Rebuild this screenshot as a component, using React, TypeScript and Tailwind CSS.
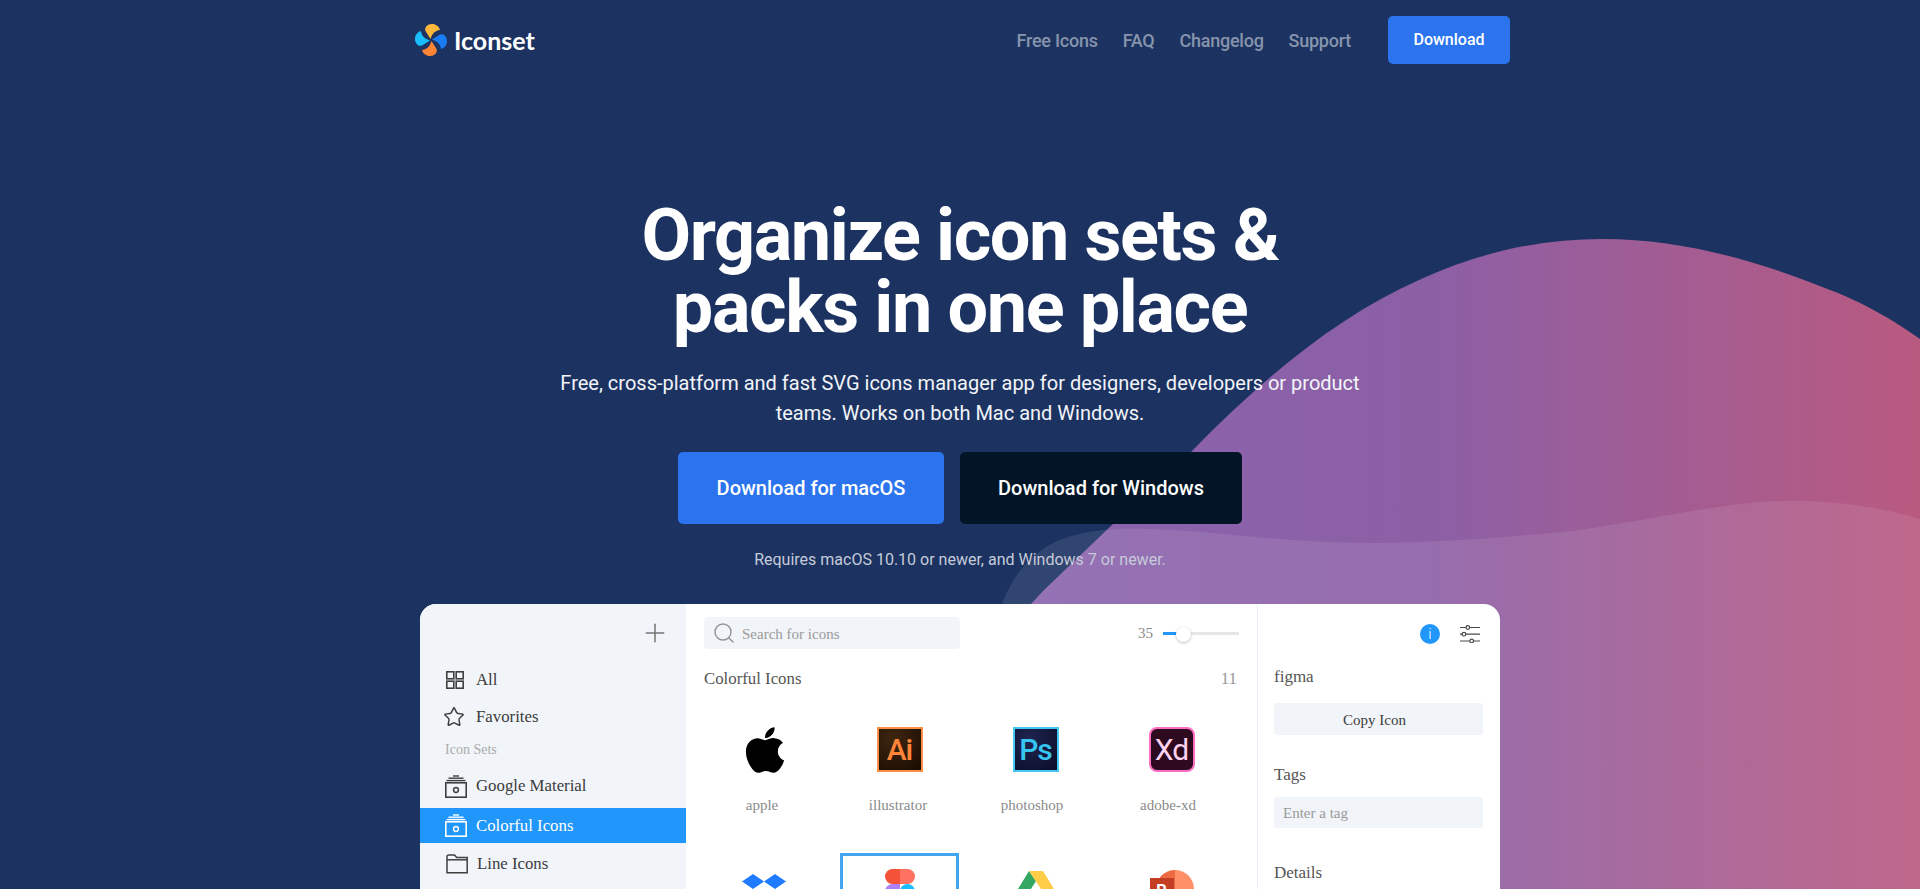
import { Search, Star, Plus } from 'lucide-react';
import { FaApple } from 'react-icons/fa';

function Logo() {
  const petal = 'M15.5 15 L10.5 7 C9 3.5 12.5 0 17 0 C21 0 24 2.5 25 6 C20 6.5 17 10 15.5 15Z';
  return (
    <svg width="32" height="32" viewBox="0 0 32 32">
      <path d={petal} fill="#fdb73d" />
      <path d={petal} fill="#1a7cf5" transform="rotate(90 16 16)" />
      <path d={petal} fill="#fb8535" transform="rotate(180 16 16)" />
      <path d={petal} fill="#19bdfb" transform="rotate(270 16 16)" />
    </svg>
  );
}

function Waves() {
  return (
    <svg className="absolute inset-0 pointer-events-none" width="1920" height="889" viewBox="0 0 1920 889">
      <defs>
        <linearGradient id="blob" x1="1030" y1="0" x2="1920" y2="0" gradientUnits="userSpaceOnUse">
          <stop offset="0" stopColor="#8a64ae" />
          <stop offset="0.45" stopColor="#8c5fa5" />
          <stop offset="1" stopColor="#b95a80" />
        </linearGradient>
      </defs>
      <path
        d="M960 680 L1044 590 L1113 524 L1191 452 C1266 375 1340 315 1419 280 C1480 252 1540 239 1603 239 C1680 239 1756 260 1830 290 C1870 305 1900 325 1920 339 L1920 889 L960 889Z"
        fill="url(#blob)"
      />
      <path
        d="M996 889 L996 625 C1006 580 1030 552 1060 540 C1085 530 1120 527 1150 529 C1190 530 1230 535 1266 538 C1320 543 1370 544 1419 542 C1470 540 1520 536 1572 531 C1630 523 1680 512 1725 506 C1760 501 1790 500 1817 501.5 C1860 504 1890 510 1920 519 L1920 889Z"
        fill="#ffffff"
        fillOpacity="0.09"
      />
    </svg>
  );
}

function GridIcon() {
  return (
    <svg width="20" height="20" viewBox="0 0 20 20" fill="none" stroke="#3f3f3f" strokeWidth="1.6">
      <rect x="1.8" y="1.8" width="7" height="7" />
      <rect x="11.2" y="1.8" width="7" height="7" />
      <rect x="1.8" y="11.2" width="7" height="7" />
      <rect x="11.2" y="11.2" width="7" height="7" />
    </svg>
  );
}

function SetIcon({ color }: { color: string }) {
  return (
    <svg width="22" height="23" viewBox="0 0 22 23" fill="none" stroke={color} strokeWidth="1.4">
      <path d="M8 1h6" />
      <path d="M3.5 3.2h15" />
      <path d="M1.5 5.6h19" />
      <rect x="0.8" y="7.8" width="20.4" height="14.4" strokeWidth="1.6" />
      <circle cx="11" cy="15" r="2.4" strokeWidth="1.5" />
    </svg>
  );
}

function FolderIcon() {
  return (
    <svg width="22" height="20" viewBox="0 0 22 20" fill="none" stroke="#3f3f3f" strokeWidth="1.5">
      <path d="M1 18.8V2.5C1 1.6 1.6 1 2.5 1h6l2.2 2.6h10.5v15.2z" />
      <path d="M1 5.8h20.2" />
    </svg>
  );
}

function SlidersIcon() {
  return (
    <svg width="20" height="18" viewBox="0 0 20 18" fill="none" stroke="#4a4a4a" strokeWidth="1.2">
      <path d="M0 2.5h6M9.6 2.5h10.4M0 9.2h2.2M5.8 9.2h14.2M0 16h9.9M13.5 16h6.5" />
      <circle cx="7.8" cy="2.5" r="1.8" />
      <circle cx="4" cy="9.2" r="1.8" />
      <circle cx="11.7" cy="16" r="1.8" />
    </svg>
  );
}

function AdobeIcon({ label, className }: { label: string; className: string }) {
  return (
    <div
      className={`w-[46px] h-[45px] border-[2px] flex items-center justify-center font-['Roboto',sans-serif] text-[30px] tracking-[-1px] ${className}`}
    >
      {label}
    </div>
  );
}

function DropboxIcon() {
  return (
    <svg width="44" height="36" viewBox="0 0 44 36" fill="#1f7bff">
      <path d="M11 0l11 7.5L11 15 0 7.5z" />
      <path d="M33 0l11 7.5L33 15 22 7.5z" />
      <path d="M11 15l11 7.5L11 30 0 22.5z" />
      <path d="M33 15l11 7.5L33 30 22 22.5z" />
    </svg>
  );
}

function FigmaIcon() {
  return (
    <svg width="30" height="45" viewBox="0 0 30 45">
      <path d="M15 0H7.5a7.5 7.5 0 0 0 0 15H15z" fill="#f4533a" />
      <path d="M15 0h7.5a7.5 7.5 0 0 1 0 15H15z" fill="#ff7262" />
      <path d="M15 15H7.5a7.5 7.5 0 0 0 0 15H15z" fill="#ae80f5" />
      <circle cx="22.5" cy="22.5" r="7.5" fill="#1abcfe" />
      <path d="M7.5 30H15v7.5a7.5 7.5 0 1 1-7.5-7.5z" fill="#0acf83" />
    </svg>
  );
}

function DriveIcon() {
  return (
    <svg width="36" height="32" viewBox="0 0 36 32" className="-mt-[10px]">
      <path d="M11 0L0 18l6 11L18 10z" fill="#34a863" />
      <path d="M11 0h14l11 18H23z" fill="#ffcd48" />
      <path d="M6 29h24l6-11H13z" fill="#4285f4" />
    </svg>
  );
}

function PowerPointIcon() {
  return (
    <div className="relative w-[44px] h-[46px] mt-[3px]">
      <svg width="44" height="46" viewBox="0 0 44 46" className="absolute inset-0">
        <path d="M25 0a19 19 0 0 0 0 38z" fill="#ee6a42" />
        <path d="M25 0a19 19 0 0 1 0 38z" fill="#ff9169" />
      </svg>
      <div className="absolute left-0 top-[8px] w-[24px] h-[26px] bg-[#c43e25] text-white font-['Roboto',sans-serif] font-bold text-[16px] flex items-center justify-center">
        P
      </div>
    </div>
  );
}

// the second row's names fall below the fold, so only the first row has labels
const icons = [
  { id: 'apple', label: 'apple', nudge: 'pr-[3px]', icon: <FaApple size={52} color="#000" className="ml-[3px]" /> },
  {
    id: 'illustrator',
    label: 'illustrator',
    nudge: 'pr-[3px]',
    icon: <AdobeIcon label="Ai" className="font-medium border-[#ff8f45] text-[#ff8438] bg-[radial-gradient(circle_at_35%_25%,#3f2610,#180a01)]" />,
  },
  {
    id: 'photoshop',
    label: 'photoshop',
    nudge: 'pr-[7px]',
    icon: <AdobeIcon label="Ps" className="font-medium border-[#42c8f5] text-[#36c5f0] bg-[radial-gradient(circle_at_35%_25%,#1e2450,#0b0c28)]" />,
  },
  {
    id: 'adobe-xd',
    label: 'adobe-xd',
    nudge: 'pr-[7px]',
    icon: <AdobeIcon label="Xd" className="rounded-[8px] border-[#ff6ec0] text-[#ffd3f0] bg-[#2e0a1f]" />,
  },
  { id: 'dropbox', icon: <DropboxIcon /> },
  { id: 'figma', icon: <FigmaIcon />, selected: true },
  { id: 'google-drive', icon: <DriveIcon /> },
  { id: 'powerpoint', icon: <PowerPointIcon /> },
];

const navLinks = [
  { label: 'Free Icons' },
  { label: 'FAQ' },
  { label: 'Changelog' },
  { label: 'Support' },
];

function Sidebar() {
  return (
    <aside className="w-[266px] shrink-0 bg-[#f1f4f8] text-[16.8px] leading-6 text-[#3c3c3c]">
      <div className="h-[58px] flex justify-end items-start pt-[14px] pr-[16px]">
        <Plus size={30} strokeWidth={1.2} color="#757575" />
      </div>
      <div className="flex items-center h-9 pl-[25px] gap-[11px]">
        <GridIcon />
        <span>All</span>
      </div>
      <div className="flex items-center h-9 pl-[23px] gap-[11px] mt-px">
        <Star size={22} strokeWidth={1.6} color="#3f3f3f" />
        <span>Favorites</span>
      </div>
      <div className="flex items-center h-[30px] pl-[25px] text-[14px] text-[#acacac]">Icon Sets</div>
      <div className="flex items-center h-9 pl-[25px] gap-[9px] mt-[3px]">
        <SetIcon color="#3f3f3f" />
        <span>Google Material</span>
      </div>
      <div className="flex items-center h-[35px] pl-[25px] gap-[9px] mt-[4px] bg-[#2196fb] text-white">
        <SetIcon color="#ffffff" />
        <span>Colorful Icons</span>
      </div>
      <div className="flex items-center h-9 pl-[26px] gap-[9px] mt-[3px]">
        <FolderIcon />
        <span>Line Icons</span>
      </div>
    </aside>
  );
}

function IconGrid() {
  return (
    <div className="grid grid-cols-[repeat(4,119px)] gap-x-[17px] gap-y-[16px] mt-[20px]">
      {icons.map(item => (
        <div
          key={item.id}
          className={`relative h-[126px] flex flex-col items-center ${item.selected ? 'border-[3px] border-[#42a5f0] pt-[13px]' : 'pt-[16px]'}`}
        >
          <div className="h-[45px] flex items-center justify-center">{item.icon}</div>
          {item.label && <p className={`mt-[22px] text-[15px] text-[#8a8a8a] ${item.nudge}`}>{item.label}</p>}
        </div>
      ))}
    </div>
  );
}

function MainPanel() {
  return (
    <section className="w-[571px] shrink-0 px-[18px] pt-[13px]">
      <div className="flex items-center justify-between">
        <div className="w-[256px] h-[32px] rounded-[4px] bg-[#f1f4f8] flex items-center pl-[8px] gap-[6px] text-[15px] text-[#9a9a9a]">
          <Search size={24} strokeWidth={1.4} color="#8f9497" />
          <span className="pt-[2px]">Search for icons</span>
        </div>
        <div className="flex items-center">
          <span className="text-[15px] text-[#8a8a8a] mr-[10px]">35</span>
          <div className="relative w-[76px] h-[3px] bg-[#e4e6e8]">
            <div className="h-full w-[14px] bg-[#2196fb]" />
            <div className="absolute left-[13px] top-[-5px] w-[15px] h-[15px] rounded-full bg-white shadow-[0_1px_3px_rgba(0,0,0,0.25)]" />
          </div>
        </div>
      </div>
      <div className="flex justify-between items-center mt-[18px] h-[24px] pr-[2px]">
        <span className="text-[16.8px] text-[#555]">Colorful Icons</span>
        <span className="text-[17px] text-[#9a9a9a]">11</span>
      </div>
      <IconGrid />
    </section>
  );
}

function DetailPanel() {
  return (
    <aside className="flex-1 border-l border-[#e8f1fa] pl-[16px] pr-[17px] pt-[20px] text-[17px] leading-6 text-[#555]">
      <div className="flex items-center justify-end gap-[20px] pr-[3px] h-[20px]">
        <div className="w-[20px] h-[20px] rounded-full bg-[#2196fb] flex items-center justify-center text-white text-[15px] font-['Roboto',sans-serif] font-light leading-none">
          i
        </div>
        <SlidersIcon />
      </div>
      <p className="mt-[21px]">figma</p>
      <button className="mt-[14px] w-full h-[32px] pr-[8px] pt-px rounded-[3px] bg-[#f1f4f8] text-[15px] text-[#3c3c3c]">Copy Icon</button>
      <p className="mt-[28px]">Tags</p>
      <div className="mt-[10px] w-full h-[31px] rounded-[3px] bg-[#f1f4f8] flex items-center pl-[9px] text-[15px] text-[#9a9a9a]">
        Enter a tag
      </div>
      <p className="mt-[33px]">Details</p>
    </aside>
  );
}

export default function App() {
  return (
    <div className="relative h-[889px] overflow-hidden bg-[#1c3362] font-['Roboto',sans-serif] text-white">
      <Waves />
      <div className="relative">
        <header className="mx-auto w-[1100px] pl-[5px] pt-4 flex items-center justify-between">
          <div className="flex items-center gap-[7px]">
            <Logo />
            <span className="font-['Lato',sans-serif] font-bold text-[25px] leading-none">Iconset</span>
          </div>
          <nav className="flex items-center">
            {navLinks.map(link => (
              <a key={link.label} className="text-[18px] font-medium tracking-[-0.25px] text-[#8794ab] mr-[25px]">
                {link.label}
              </a>
            ))}
            <a className="ml-[12px] w-[122px] h-12 rounded-[5px] bg-[#2b74ee] flex items-center justify-center text-[16px] font-medium">
              Download
            </a>
          </nav>
        </header>

        <main className="flex flex-col items-center">
          <h1 className="mt-[136px] text-center text-[72px] leading-[72px] font-bold tracking-[-1.4px]">
            Organize icon sets &amp;
            <br />
            packs in one place
          </h1>
          <p className="mt-[24px] w-[820px] text-center text-[20px] leading-[30px] text-[#f2f4f8]">
            Free, cross-platform and fast SVG icons manager app for designers, developers or product teams. Works on both Mac and Windows.
          </p>
          <div className="mt-[24px] flex gap-4">
            <a className="w-[266px] h-[72px] rounded-[5px] bg-[#2b74ee] flex items-center justify-center text-[20px] font-medium">
              Download for macOS
            </a>
            <a className="w-[282px] h-[72px] rounded-[5px] bg-[#021526] flex items-center justify-center text-[20px] font-medium">
              Download for Windows
            </a>
          </div>
          <p className="mt-[24px] text-[16px] leading-6 text-[#c5cbd8]">Requires macOS 10.10 or newer, and Windows 7 or newer.</p>

          <div className="mt-[32px] w-[1080px] h-[400px] rounded-t-[16px] overflow-hidden bg-white flex font-['Liberation_Serif',serif]">
            <Sidebar />
            <MainPanel />
            <DetailPanel />
          </div>
        </main>
      </div>
    </div>
  );
}
